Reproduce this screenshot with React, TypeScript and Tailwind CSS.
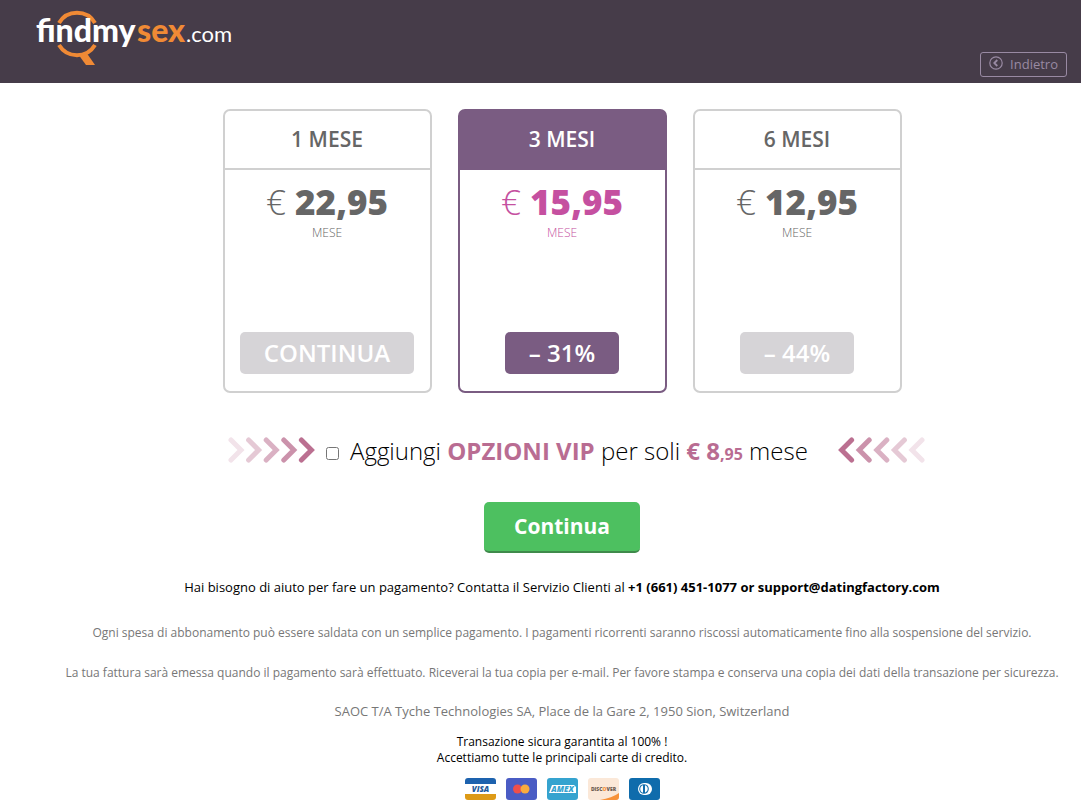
import { useState } from 'react';

interface Plan {
  id: string;
  title: string;
  price: string;
  action: string;
}

const PLANS: Plan[] = [
  { id: '1m', title: '1 MESE', price: '22,95', action: 'CONTINUA' },
  { id: '3m', title: '3 MESI', price: '15,95', action: '– 31%' },
  { id: '6m', title: '6 MESI', price: '12,95', action: '– 44%' },
];

function Logo() {
  return (
    <svg width="200" height="60" viewBox="0 0 200 60" role="img" aria-label="findmysex.com">
      <g fill="none" stroke="#f08a35" strokeWidth="4">
        <path d="M24 17 A21 21 0 0 1 60 17" />
        <path d="M24 39 A21 21 0 0 0 60 39" />
      </g>
      <path d="M43 48 L51 46 L60 59 L51 59 Z" fill="#f08a35" />
      <text y="36" fontFamily="Lato, 'Open Sans', sans-serif">
        <tspan x="1" fontSize="32" fontWeight="900" fill="#fff">findmy</tspan>
        <tspan x="102" fontSize="32" fontWeight="900" fill="#f08a35">sex</tspan>
        <tspan x="151" fontSize="22" fill="#fff">.com</tspan>
      </text>
    </svg>
  );
}

interface PlanCardProps {
  plan: Plan;
  selected: boolean;
  onSelect: () => void;
}

function PlanCard({ plan, selected, onSelect }: PlanCardProps) {
  return (
    <section
      className={`flex h-71 w-[209px] flex-col items-center rounded-[7px] border-2 ${
        selected ? 'border-[#7a5c82]' : 'border-[#d0d0d0]'
      }`}
    >
      <h2
        className={`w-full border-b-2 pb-px text-center text-[21px] leading-14 font-semibold ${
          selected ? 'border-[#7a5c82] bg-[#7a5c82] text-white' : 'border-[#d0d0d0] text-[#666]'
        }`}
      >
        {plan.title}
      </h2>
      <div className={`flex flex-col items-center ${selected ? 'text-[#c550a0]' : 'text-[#666]'}`}>
        <p className="mt-2 text-[35px] leading-12 font-light">
          € <span className="font-extrabold">{plan.price}</span>
        </p>
        <p className="text-xs leading-[14px] font-light">MESE</p>
      </div>
      <button
        type="button"
        onClick={onSelect}
        className={`mt-auto mb-[17px] h-[42px] rounded-[5px] px-6 text-2xl font-semibold text-white ${
          selected ? 'bg-[#7a5c82]' : 'bg-[#d6d4d7]'
        }`}
      >
        {plan.action}
      </button>
    </section>
  );
}

function Chevrons({ flip = false }: { flip?: boolean }) {
  const opacities = [0.18, 0.35, 0.5, 0.7, 0.92];
  return (
    <svg
      width="88"
      height="26"
      viewBox="0 0 88 26"
      aria-hidden="true"
      className={`mb-[3px] shrink-0 ${flip ? '-scale-x-100' : ''}`}
    >
      {opacities.map((opacity, i) => (
        <path
          key={opacity}
          d={`M${3 + i * 17.6} 3 l10 10 l-10 10`}
          fill="none"
          stroke="#b56488"
          strokeWidth="5"
          strokeLinecap="round"
          opacity={opacity}
        />
      ))}
    </svg>
  );
}

function PaymentCards() {
  return (
    <div className="flex gap-[10px]">
      <svg width="31" height="22" role="img" aria-label="Visa">
        <rect width="31" height="22" rx="3" fill="#fff" />
        <path d="M0 6 V3 a3 3 0 0 1 3 -3 H28 a3 3 0 0 1 3 3 V6 Z" fill="#1d62ae" />
        <path d="M0 16 V19 a3 3 0 0 0 3 3 H28 a3 3 0 0 0 3 -3 V16 Z" fill="#dd9a16" />
        <text x="15.5" y="14" textAnchor="middle" fontFamily="Open Sans" fontSize="8" fontWeight="800" fontStyle="italic" fill="#1d5a9c">VISA</text>
      </svg>
      <svg width="31" height="22" role="img" aria-label="Mastercard">
        <rect width="31" height="22" rx="3" fill="#4a5cc4" />
        <circle cx="11.5" cy="11" r="4.5" fill="#ee4f4a" />
        <circle cx="19" cy="11" r="4.5" fill="#f9ab3f" />
      </svg>
      <svg width="31" height="22" role="img" aria-label="American Express">
        <rect width="31" height="22" rx="3" fill="#35a3cf" />
        <path d="M5 7 H27 L29 9 V15 H2 Z" fill="#fff" />
        <text x="15.5" y="14" textAnchor="middle" fontFamily="Open Sans" fontSize="8" fontWeight="800" fontStyle="italic" fill="#35a3cf">AMEX</text>
      </svg>
      <svg width="31" height="22" role="img" aria-label="Discover">
        <rect width="31" height="22" rx="3" fill="#fbe8d8" />
        <path d="M12 22 Q24 20 31 15 V19 a3 3 0 0 1 -3 3 Z" fill="#f7923a" />
        <text x="15.5" y="13" textAnchor="middle" fontFamily="Open Sans" fontSize="5" fontWeight="800" fill="#6b5a50">
          DISC<tspan fill="#f7923a">O</tspan>VER
        </text>
      </svg>
      <svg width="31" height="22" role="img" aria-label="Diners Club">
        <rect width="31" height="22" rx="3" fill="#0f6cac" />
        <rect x="9" y="5" width="14" height="12" rx="6" fill="#fff" />
        <circle cx="15" cy="11" r="4.8" fill="#0f6cac" />
        <path d="M14 7.2 a4 4 0 0 0 0 7.6 Z M16 7.2 a4 4 0 0 1 0 7.6 Z" fill="#fff" />
      </svg>
    </div>
  );
}

export default function App() {
  const [selectedPlan, setSelectedPlan] = useState('3m');
  const [vip, setVip] = useState(false);

  return (
    <div className="bg-white font-['Open_Sans',sans-serif] text-black">
      <header className="flex justify-between bg-[#463c49] pr-[14px] pb-[6px] pl-[35px]">
        <a href="#" className="pt-[6px] pb-[11px]">
          <Logo />
        </a>
        <a
          href="#"
          className="flex h-[25px] items-center gap-[7px] self-end rounded-[3px] border border-[#998aa3] px-2 text-[13px] text-[#998aa3]"
        >
          <svg width="14" height="14" viewBox="0 0 14 14" fill="none" stroke="currentColor" aria-hidden="true" className="mb-1">
            <circle cx="7" cy="7" r="6.2" strokeWidth="1.2" />
            <path d="M8.3 4 L5.3 7 L8.3 10" strokeWidth="1.8" />
          </svg>
          Indietro
        </a>
      </header>

      <main className="flex flex-col items-center pt-[26px] pl-[43px]">
        <div className="flex gap-[26px]">
          {PLANS.map((plan) => (
            <PlanCard
              key={plan.id}
              plan={plan}
              selected={plan.id === selectedPlan}
              onSelect={() => setSelectedPlan(plan.id)}
            />
          ))}
        </div>

        {/* VIP upsell */}
        <div className="mt-10 ml-[29px] flex w-[697px] items-center">
          <Chevrons />
          <label className="ml-[10px] flex flex-1 items-center gap-[11px] text-2xl leading-9 font-light whitespace-nowrap">
            <input
              type="checkbox"
              checked={vip}
              onChange={(e) => setVip(e.target.checked)}
              className="mt-1 size-[13px]"
            />
            <span>
              Aggiungi <b className="font-bold text-[#b96c92]">OPZIONI VIP</b> per soli{' '}
              <b className="font-bold text-[#b96c92]">
                € 8<span className="text-base">,95</span>
              </b>{' '}
              mese
            </span>
          </label>
          <Chevrons flip />
        </div>

        <button
          type="button"
          className="mt-[33px] h-[51px] w-[156px] rounded-[5px] border-b-2 border-[#3f8a4b] bg-[#4dc060] pt-px text-[21px] font-bold text-white"
        >
          Continua
        </button>

        <div className="flex flex-col items-center text-center">
          <p className="mt-6 text-[13px] leading-5">
            Hai bisogno di aiuto per fare un pagamento? Contatta il Servizio Clienti al{' '}
            <b className="font-bold">+1 (661) 451-1077 or support@datingfactory.com</b>
          </p>
          <p className="mt-[26px] text-xs leading-5 text-[#777]">
            Ogni spesa di abbonamento può essere saldata con un semplice pagamento. I pagamenti ricorrenti saranno
            riscossi automaticamente fino alla sospensione del servizio.
          </p>
          <p className="mt-5 text-xs leading-5 text-[#777]">
            La tua fattura sarà emessa quando il pagamento sarà effettuato. Riceverai la tua copia per e-mail. Per
            favore stampa e conserva una copia dei dati della transazione per sicurezza.
          </p>
          <p className="mt-[18px] text-[13px] leading-5 text-[#777]">
            SAOC T/A Tyche Technologies SA, Place de la Gare 2, 1950 Sion, Switzerland
          </p>
          <p className="mt-[13px] mb-3 text-xs leading-4">
            Transazione sicura garantita al 100% !
            <br />
            Accettiamo tutte le principali carte di credito.
          </p>
          <PaymentCards />
        </div>
      </main>
    </div>
  );
}
